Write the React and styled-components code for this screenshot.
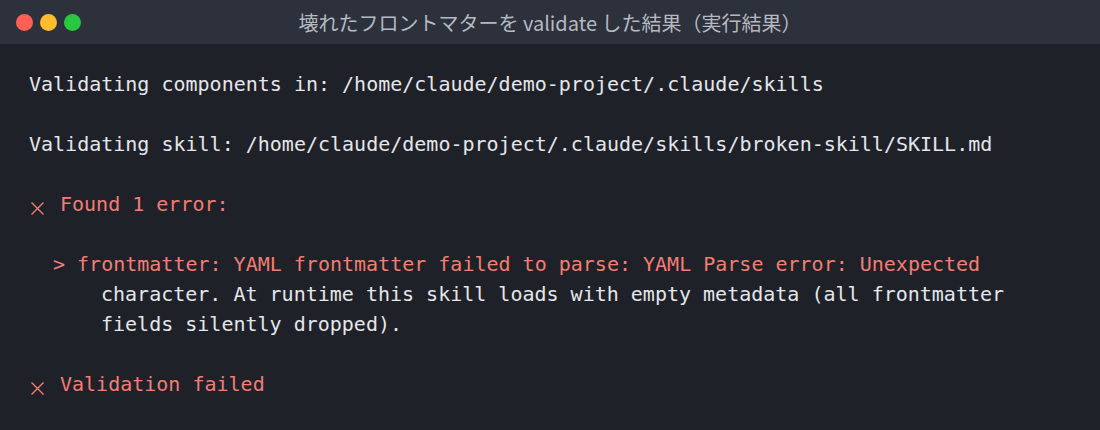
import React from "react";
import styled, { createGlobalStyle } from "styled-components";

const Global = createGlobalStyle`
  html, body { margin: 0; padding: 0; background: #1f2129; }
  body { width: 1100px; height: 430px; overflow: hidden; }
`;

const Window = styled.div`
  width: 1100px;
  height: 430px;
  display: flex;
  flex-direction: column;
  background: #1f2129;
`;

const TitleBar = styled.div`
  height: 44px;
  flex: 0 0 44px;
  background: #2d313b;
  display: flex;
  align-items: center;
  position: relative;
  box-sizing: border-box;
`;

const Lights = styled.div`
  display: flex;
  gap: 7px;
  padding-left: 16px;
`;

const Light = styled.span`
  width: 17px;
  height: 17px;
  border-radius: 50%;
  background: ${(p) => p.$c};
  display: block;
`;

const Title = styled.div`
  position: absolute;
  left: 0;
  right: 0;
  top: 0;
  bottom: 0;
  display: flex;
  align-items: center;
  justify-content: center;
  font-family: "Noto Sans CJK JP", "Noto Sans", sans-serif;
  font-size: 20px;
  color: #b5b9c2;
  pointer-events: none;
`;

const Body = styled.div`
  padding: 25px 29px;
  font-family: "DejaVu Sans Mono", monospace;
  font-size: 20px;
  line-height: 30px;
  color: #e4e6eb;
  white-space: pre;
`;

const Line = styled.div`
  height: 30px;
  color: ${(p) => (p.$err ? "#f27d72" : "inherit")};
  padding-left: ${(p) => p.$indent || 0}px;
  display: flex;
  align-items: center;
`;

const Mark = styled.span`
  display: inline-flex;
  width: 31px;
  padding-left: 2px;
  box-sizing: border-box;
  align-items: center;
  height: 30px;
  padding-top: 8px;
`;

const Cross = () => (
  <svg width="13" height="13" viewBox="0 0 13 13">
    <path d="M0.5 0.5 L12.5 12.5 M12.5 0.5 L0.5 12.5" stroke="#f27d72" strokeWidth="1.4" fill="none" />
  </svg>
);

export default function App() {
  return (
    <Window>
      <Global />
      <TitleBar>
        <Lights>
          <Light $c="#ff5f57" />
          <Light $c="#febc2e" />
          <Light $c="#28c840" />
        </Lights>
        <Title>壊れたフロントマターを validate した結果（実行結果）</Title>
      </TitleBar>
      <Body>
        <Line>Validating components in: /home/claude/demo-project/.claude/skills</Line>
        <Line />
        <Line>Validating skill: /home/claude/demo-project/.claude/skills/broken-skill/SKILL.md</Line>
        <Line />
        <Line $err>
          <Mark><Cross /></Mark>Found 1 error:
        </Line>
        <Line />
        <Line $err $indent={24}>&gt; frontmatter: YAML frontmatter failed to parse: YAML Parse error: Unexpected</Line>
        <Line $indent={72}>character. At runtime this skill loads with empty metadata (all frontmatter</Line>
        <Line $indent={72}>fields silently dropped).</Line>
        <Line />
        <Line $err>
          <Mark><Cross /></Mark>Validation failed
        </Line>
      </Body>
    </Window>
  );
}
